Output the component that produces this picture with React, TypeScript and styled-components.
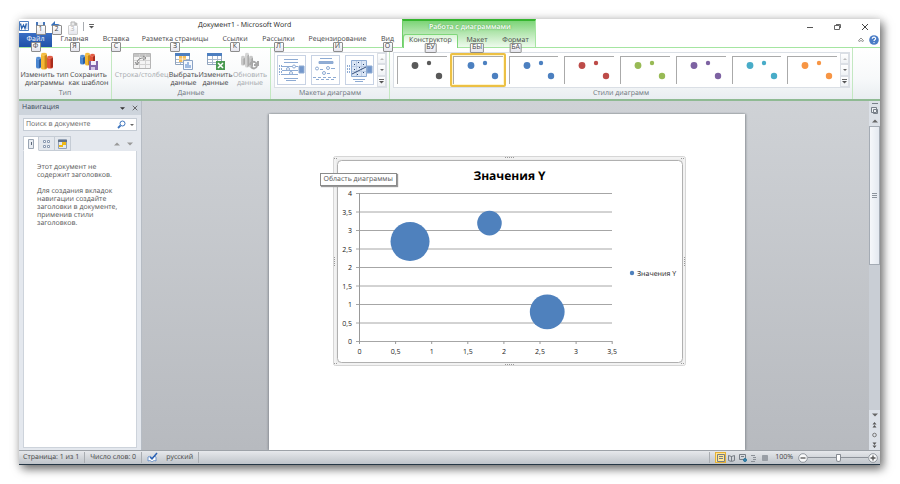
import React from "react";
import styled, { createGlobalStyle, css } from "styled-components";

const GlobalStyle = createGlobalStyle`
  * { box-sizing: border-box; }
  body { margin: 0; background: #fff; font-family: "Open Sans", "Noto Sans", sans-serif; font-size: 7px; line-height: 8px; color: #444; text-rendering: geometricPrecision; }
  button, input { font: inherit; color: inherit; margin: 0; padding: 0; border: 0; background: none; text-rendering: inherit; }
  h1, h2, p { margin: 0; font: inherit; }
  svg { display: block; flex: none; }
`;

const Desktop = styled.div`
  min-height: 100vh;
  padding: 19px 20px 19px 19px;
  display: flex;
  flex-direction: column;
`;

const AppWindow = styled.div`
  flex: 1;
  display: flex;
  flex-direction: column;
  background: #fff;
  border-bottom: 1px solid #263746;
  box-shadow: 3px 4px 9px rgba(0, 0, 0, 0.55), 0 0 10px rgba(0, 0, 0, 0.14);
`;

/* ---------- header ---------- */

const Header = styled.header`
  display: flex;
  height: 29px;
  border-bottom: 1px solid #a5e5a1;
`;

const MainColumn = styled.div`
  width: 383px;
  display: flex;
  flex-direction: column;
`;

const TitleRow = styled.div`
  height: 15px;
  display: flex;
  align-items: center;
`;

const QuickBar = styled.div`
  width: 179px;
  display: flex;
  align-items: center;
  gap: 5px;
`;

const QuickButton = styled.button`
  position: relative;
  width: 11px;
  height: 11px;
`;

const Divider = styled.span<{ $height?: number }>`
  width: 1px;
  height: ${(p) => p.$height ?? 9}px;
  background: #a9adb2;
`;

const DocTitle = styled.h1`
  font-size: 7px;
  color: #222;
  white-space: nowrap;
`;

const Tabs = styled.nav`
  display: flex;
  height: 14px;
`;

const Tab = styled.button<{ $width: number; $kind?: "file" | "active" }>`
  position: relative;
  width: ${(p) => p.$width}px;
  height: 14px;
  white-space: nowrap;
  ${(p) =>
    p.$kind === "file" &&
    css`
      color: #fff;
      background: linear-gradient(#3a6ec4, #1f51a8);
    `}
  ${(p) =>
    p.$kind === "active" &&
    css`
      border-radius: 2px 2px 0 0;
      box-shadow: inset 1px 1px #7fd77a, inset -1px 0 #7fd77a, 0 1px #fff;
      background: linear-gradient(#d5f3d1, #fff 70%);
    `}
`;

const KeyTip = styled.span<{ $quick?: boolean; $dim?: boolean }>`
  position: absolute;
  top: ${(p) => (p.$quick ? 4 : 9)}px;
  left: 50%;
  transform: translateX(-50%);
  z-index: 2;
  min-width: 10px;
  height: 10px;
  padding: 0 1px;
  border: 1px solid ${(p) => (p.$dim ? "#cfcfcf" : "#8d8d8d")};
  border-radius: 1px;
  background: linear-gradient(#fff, #e5e5ed);
  color: ${(p) => (p.$dim ? "#b5b5b5" : "#444")};
  font-size: 7px;
  line-height: 8px;
  text-align: center;
`;

const ContextGroup = styled.div`
  width: 134px;
  border-top: 2px solid #34b52e;
  border-right: 1px solid #a5e5a1;
  border-left: 1px solid #6fce69;
  background: linear-gradient(#7cd477, #b3e6af 45%, #eefaed);
`;

const ContextTitle = styled.div`
  height: 13px;
  line-height: 14px;
  padding-left: 26px;
  color: #fff;
  font-weight: 600;
  text-shadow: 0 0 2px #3c9a37;
`;

const WindowColumn = styled.div`
  flex: 1;
  display: flex;
  flex-direction: column;
  align-items: flex-end;
`;

const WindowButtons = styled.div`
  height: 16px;
  display: flex;
  align-items: center;
  gap: 19px;
  padding-right: 11px;
`;

const HelpButtons = styled.div`
  display: flex;
  align-items: center;
  gap: 5px;
  padding: 0 1px;
`;

/* ---------- ribbon ---------- */

const Ribbon = styled.section`
  display: flex;
  height: 53px;
  background: linear-gradient(#fff, #f7f9fa 60%, #e9edf1);
  border-bottom: 2px solid #8fba93;
`;

const Group = styled.div<{ $grow?: boolean; $width?: number }>`
  display: flex;
  flex-direction: column;
  ${(p) => (p.$grow ? "flex: 1; min-width: 0;" : `width: ${p.$width}px; flex: none;`)}
  border-right: 1px solid #c3e8c1;
`;

const GroupBody = styled.div`
  flex: 1;
  display: flex;
  align-items: stretch;
  padding: 4px 2px 0;
`;

const GroupName = styled.div`
  height: 10px;
  line-height: 10px;
  text-align: center;
  color: #6b737c;
`;

const RibbonTail = styled.div`
  flex: none;
  width: 27px;
`;

const BigButton = styled.button<{ $width: number }>`
  width: ${(p) => p.$width}px;
  display: flex;
  flex-direction: column;
  align-items: center;
  gap: 2px;
  white-space: nowrap;
  &:disabled { color: #a4a8ac; }
`;

const ButtonText = styled.span`
  display: flex;
  flex-direction: column;
  align-items: center;
`;

const Gallery = styled.div<{ $grow?: boolean }>`
  display: flex;
  height: 36px;
  ${(p) => p.$grow && "flex: 1; min-width: 0;"}
  margin-left: 1px;
  border: 1px solid #dadfe5;
  background: #fff;
`;

const LayoutItems = styled.div`
  display: flex;
  align-items: center;
  gap: 5px;
  padding: 0 3px 0 2px;
`;

const LayoutItem = styled.button`
  width: 29px;
  height: 30px;
  border: 1px solid #c7d2e4;
  background: #fff;
`;

const StyleItems = styled.div`
  flex: 1;
  min-width: 0;
  display: grid;
  grid-template-columns: repeat(8, minmax(0, 1fr));
`;

const StyleItem = styled.button<{ $selected?: boolean }>`
  height: 34px;
  padding: 1px;
  border: 2px solid transparent;
  ${(p) => p.$selected && "border-color: #ecc044; border-radius: 2px; background: #fff5cf;"}
`;

const StylePreview = styled.span`
  display: block;
  height: 28px;
  border-top: 1px solid #aaa;
  border-left: 1px solid #aaa;
  background: #fff;
`;

const GalleryScroll = styled.div`
  width: 9px;
  display: flex;
  flex-direction: column;
`;

const ScrollButton = styled.button`
  flex: 1;
  display: grid;
  place-items: center;
  border: 1px solid #dbdfe5;
  background: linear-gradient(#fff, #eff2f5);
`;

/* ---------- workspace ---------- */

const Workspace = styled.main`
  flex: 1;
  display: flex;
  background: linear-gradient(#cfd2d6, #b7babf);
`;

const NavPane = styled.aside`
  width: 123px;
  display: flex;
  flex-direction: column;
  padding-bottom: 2px;
  background: #e4e8ee;
  border-right: 1px solid #b6bcc4;
`;

const NavHeader = styled.div`
  height: 14px;
  display: flex;
  align-items: center;
  gap: 7px;
  padding: 0 3px;
  background: #cdd4dc;
`;

const NavTitle = styled.h2`
  flex: 1;
  color: #3b4a5a;
`;

const SearchBox = styled.label`
  display: flex;
  align-items: center;
  gap: 4px;
  height: 13px;
  margin: 3px 4px 5px;
  padding: 0 2px;
  border: 1px solid #c5ccd5;
  background: #fff;
`;

const SearchInput = styled.input`
  flex: 1;
  min-width: 0;
  outline: 0;
  &::placeholder { color: #666; opacity: 1; }
`;

const NavTabs = styled.div`
  display: flex;
  align-items: center;
  height: 15px;
  padding: 0 4px;
`;

const NavTab = styled.button<{ $active?: boolean }>`
  width: 16px;
  height: 15px;
  display: grid;
  place-items: center;
  border: 1px solid #c5ccd5;
  border-left-width: ${(p) => (p.$active ? 1 : 0)}px;
  ${(p) => p.$active && "background: #fff; border-bottom-color: #fff;"}
`;

const NavArrows = styled.div`
  flex: 1;
  display: flex;
  justify-content: flex-end;
  gap: 7px;
  padding-right: 4px;
`;

const NavContent = styled.div`
  flex: 1;
  display: flex;
  flex-direction: column;
  gap: 8px;
  margin: 0 4px;
  padding: 13px 24px 0 13px;
  border: 1px solid #cdd3db;
  border-top: 0;
  background: #fff;
  color: #555;
  white-space: nowrap;
`;

const DocArea = styled.div`
  flex: 1;
  display: flex;
  justify-content: center;
  padding: 13px 0 0 2px;
`;

const Page = styled.article`
  width: 476px;
  padding: 42px 60px 0 64px;
  background: #fff;
  box-shadow: 1px 0 2px #8d9197, -1px 0 2px #8d9197;
`;

const ChartFrame = styled.figure`
  position: relative;
  margin: 0;
  height: 210px;
`;

const Tooltip = styled.div`
  position: absolute;
  top: 17px;
  left: -13px;
  height: 13px;
  padding: 0 3px;
  border: 1px solid #8b8b8b;
  background: #fff;
  box-shadow: 1px 1px 1px #999;
  color: #555;
  line-height: 11px;
  white-space: nowrap;
`;

const VerticalScroll = styled.div`
  width: 11px;
  display: flex;
  flex-direction: column;
  background: #dce1e8;
`;

const ScrollPart = styled.button<{ $height: number }>`
  height: ${(p) => p.$height}px;
  display: grid;
  place-items: center;
`;

const ScrollTrack = styled.div`
  flex: 1;
  background: #c9ced5;
`;

const ScrollThumb = styled.div`
  height: 49%;
  display: grid;
  place-items: center;
  border: 1px solid #a4abb4;
  background: linear-gradient(90deg, #f6f8fb, #e4e9f0);
`;

/* ---------- status bar ---------- */

const StatusBar = styled.footer`
  height: 14px;
  display: flex;
  align-items: center;
  gap: 5px;
  padding: 0 2px 0 4px;
  border-top: 1px solid #9da2a8;
  background: linear-gradient(#e6e8eb, #bfc4ca);
  white-space: nowrap;
`;

const StatusButton = styled.button`
  display: flex;
  align-items: center;
`;

const StatusItem = styled.span<{ $inset?: number }>`
  padding-left: ${(p) => p.$inset ?? 0}px;
`;

const Spacer = styled.span`
  flex: 1;
`;

const Views = styled.div`
  display: flex;
  align-items: center;
`;

const ViewButton = styled.button<{ $active?: boolean }>`
  width: 11px;
  height: 11px;
  display: grid;
  place-items: center;
  border: 1px solid transparent;
  ${(p) => p.$active && "border-color: #e6b136; background: #ffe694;"}
`;

const Zoom = styled.div`
  display: flex;
  align-items: center;
`;

const ZoomRange = styled.input`
  appearance: none;
  width: 60px;
  height: 10px;
  background: linear-gradient(#8d9299, #8d9299) center / 100% 1px no-repeat;
  &::-webkit-slider-thumb {
    appearance: none;
    width: 5px;
    height: 8px;
    border: 1px solid #878c93;
    border-radius: 1px 1px 3px 3px;
    background: #fff;
  }
`;

/* ---------- drawings ---------- */

const Arrow = ({ up, color = "#666", w = 4 }: { up?: boolean; color?: string; w?: number }) => (
  <svg width={w} height={w} viewBox="0 0 4 4">
    <path d={up ? "M0 3h4L2 1z" : "M0 1h4L2 3z"} fill={color} />
  </svg>
);

const MoreArrow = () => (
  <svg width="5" height="6" viewBox="0 0 5 6">
    <path d="M0 1.500h5" stroke="#666" />
    <path d="M0 3h5L2.500 5.500z" fill="#555" />
  </svg>
);

const WordIcon = () => (
  <svg width="11" height="11" viewBox="0 0 11 11">
    <path d="M.5.5h9v9h-9z" fill="#fff" stroke="#4f7fc0" />
    <path d="M7 3h2M7 5h2M7 7h2" stroke="#9ab6dc" />
    <path d="M1.500 2.500l1.200 5L4.500 4l1.500 3.500 1.300-5" fill="none" stroke="#2c64ae" strokeWidth="1.300" />
  </svg>
);

const SaveIcon = () => (
  <svg width="11" height="11" viewBox="0 0 11 11">
    <path d="M1 1h9v9H1z" fill="#4776b8" />
    <path d="M3 1h5v4H3z" fill="#eef4fc" />
    <path d="M3 7h5v3H3z" fill="#cfdcf0" />
  </svg>
);

const UndoIcon = () => (
  <svg width="11" height="11" viewBox="0 0 11 11">
    <path d="M2 4h4c4 0 4 5 1 6" fill="none" stroke="#3972bd" strokeWidth="2" />
    <path d="M0 4l4-4v8z" fill="#3972bd" />
  </svg>
);

const PrintIcon = () => (
  <svg width="11" height="11" viewBox="0 0 11 11">
    <path d="M2 4h7v5H2z" fill="#c4c4c4" />
    <path d="M4 1h4v4H4z" fill="#e9e9e9" stroke="#b5b5b5" />
    <circle cx="9" cy="3" r="1.500" fill="#bbb" />
  </svg>
);

const Bar = ({ x, y, h, c, d, w = 5 }: { x: number; y: number; h: number; c: string; d: string; w?: number }) => (
  <g>
    <path d={`M${x} ${y}v${h}a${w / 2} 1.5 0 0 0 ${w} 0v${-h}z`} fill={c} />
    <path d={`M${x + w * 0.6} ${y}v${h + 1.2}l${w * 0.4} -1.2v${-h}z`} fill={d} />
    <ellipse cx={x + w / 2} cy={y} rx={w / 2} ry="1.3" fill={c} stroke="#fff" strokeOpacity=".45" strokeWidth=".5" />
  </g>
);

const ChartIcon = () => (
  <svg width="18" height="18" viewBox="0 0 18 18">
    <Bar x={0} y={6} h={9} c="#4b87d1" d="#2c5d9f" />
    <Bar x={5} y={2} h={14} c="#f4b834" d="#c7851a" w={6} />
    <Bar x={11} y={5} h={10} c="#e2543a" d="#a92c1b" w={6} />
  </svg>
);

const ChartSaveIcon = () => (
  <svg width="20" height="18" viewBox="0 0 20 18">
    <Bar x={1} y={4} h={7} c="#4b87d1" d="#2c5d9f" w={5} />
    <Bar x={6} y={2} h={10} c="#f4b834" d="#c7851a" w={5} />
    <Bar x={11} y={3} h={8} c="#e2543a" d="#a92c1b" w={5} />
    <path d="M10 9h9v9h-9z" fill="#8468ab" />
    <path d="M12 9h5v4h-5z" fill="#f3effa" />
    <path d="M12 15h4v3h-4z" fill="#d3c6e6" />
  </svg>
);

const SwapIcon = () => (
  <svg width="18" height="18" viewBox="0 0 18 18">
    <path d="M.5 1.500h17v15H.5z" fill="#f4f4f4" stroke="#b5b5b5" />
    <path d="M1 2h16v3H1z" fill="#c4c4c4" />
    <path d="M1 8.500h16M1 12.500h16M6.500 2v14M12.500 2v14" stroke="#d2d2d2" />
    <path d="M4 12c0-5 3-6 7-6M2 10l2 3 2-3M10 4l3 2-3 2" fill="none" stroke="#858585" />
  </svg>
);

const Sheet = () => (
  <g>
    <path d="M.5 1.500h14v11H.5z" fill="#fff" stroke="#8fa3bd" />
    <path d="M0 1h15v3H0z" fill="#4d7fc0" />
    <path d="M1 7.500h13M1 10.500h13M5.500 4v8M10.500 4v8" stroke="#a9b8cc" />
  </g>
);

const SelectDataIcon = () => (
  <svg width="18" height="18" viewBox="0 0 18 18">
    <Sheet />
    <path d="M4 4h7v6H4z" fill="#f4bd59" />
    <path d="M4 7h7M7.500 4v6" stroke="#fff" strokeWidth=".6" />
    <path d="M8.500 8.500h9v9h-9z" fill="#f4f8fd" stroke="#8aa2c4" />
    <path d="M11 16v-4M13 16v-6M15 16v-3" stroke="#4b7fc6" />
  </svg>
);

const EditDataIcon = () => (
  <svg width="18" height="18" viewBox="0 0 18 18">
    <Sheet />
    <path d="M9 9h9v9H9z" fill="#4b9a52" />
    <path d="M11 11l5 5M16 11l-5 5" stroke="#fff" strokeWidth="1.500" />
  </svg>
);

const RefreshIcon = () => (
  <svg width="18" height="18" viewBox="0 0 18 18">
    <Bar x={0} y={5} h={7} c="#c9c9c9" d="#a9a9a9" w={4} />
    <Bar x={4} y={2} h={12} c="#d2d2d2" d="#aaa" w={4} />
    <Bar x={8} y={5} h={9} c="#c4c4c4" d="#a4a4a4" w={4} />
    <path d="M9 13c1-4 5-4 7-1M17 9v4h-4M16 14c-1 3-4 3-6 1" fill="none" stroke="#a8a8a8" strokeWidth="2" />
  </svg>
);

const LayoutIcon = ({ variant }: { variant: number }) => (
  <svg width="27" height="28" viewBox="0 0 27 28">
    {variant === 0 && (
      <g stroke="#8eabd3" fill="none">
        <path d="M6 3.500h14M6 6.500h14M4 10.500h16M4 14.500h16M4 18.500h16M6 22.500h14M8 24.500h10" />
        <path d="M1.500 9v10M3.500 9v10" strokeDasharray="2 1" />
        <circle cx="10" cy="13" r="1.500" fill="#fff" /><circle cx="16" cy="10.500" r="1.500" fill="#fff" /><circle cx="13" cy="17" r="1.500" fill="#fff" />
        <path d="M21 10h5v7h-5z" fill="#7397cb" />
      </g>
    )}
    {variant === 1 && (
      <g stroke="#8eabd3" fill="none">
        <path d="M8 2.500h12" />
        <path d="M7 5.500h14v2H7z" fill="#91add6" />
        <circle cx="5" cy="12.500" r="1.500" /><path d="M8 13.500h3" />
        <circle cx="16" cy="12" r="1.500" /><path d="M19 12.500h4" />
        <circle cx="12" cy="17" r="1.500" /><path d="M15 17.500h3" />
        <path d="M1 21.500h25M4 23.500h20" strokeDasharray="3 2" />
      </g>
    )}
    {variant === 2 && (
      <g stroke="#8eabd3" fill="none">
        <path d="M5.500 4.500h15v16h-15z" fill="#dbe6f5" />
        <path d="M1.500 9v9M3.500 9v9" strokeDasharray="2 1" />
        <path d="M7 23.500h12M9 25.500h8" />
        <path d="M6 10.500h14M6 15.500h14M10.500 5v15M15.500 5v15" stroke="#bccde6" />
        <path d="M6 18l14-7" stroke="#344f7c" />
        <path d="M8 8.500h1M12 6.500h1M17 8.500h1M8 13.500h1M13 11.500h1M17 16.500h1M11 18.500h1" stroke="#24416f" />
        <path d="M21 10h5v7h-5z" fill="#7397cb" />
      </g>
    )}
  </svg>
);

const Dots = ({ color }: { color: string }) => (
  <svg width="46" height="27" viewBox="0 0 46 27" fill={color}>
    <circle cx="17" cy="8.500" r="3.400" />
    <circle cx="31" cy="6" r="2.200" />
    <circle cx="41" cy="19" r="3.200" />
  </svg>
);

const MinimizeIcon = () => (
  <svg width="8" height="8" viewBox="0 0 8 8" stroke="#555"><path d="M1 4.500h6" /></svg>
);
const RestoreIcon = () => (
  <svg width="9" height="8" viewBox="0 0 9 8" stroke="#666" fill="none"><path d="M1.500 2.500h5v4h-5zM3 1.500h4.500V5" /></svg>
);
const CloseIcon = ({ size = 8 }: { size?: number }) => (
  <svg width={size} height={size} viewBox="0 0 8 8" stroke="#444"><path d="M1 1l6 6M7 1L1 7" /></svg>
);
const CollapseIcon = () => (
  <svg width="6" height="6" viewBox="0 0 6 6" stroke="#777" fill="#fff"><path d="M.5 3.500L3 1l2.500 2.500-.5 1-2-1-2 1z" strokeWidth=".8" /></svg>
);
const HelpIcon = () => (
  <svg width="10" height="10" viewBox="0 0 10 10">
    <circle cx="5" cy="5" r="4.800" fill="#4a7cc6" />
    <path d="M3.300 3.800C3.300 1.500 6.800 1.700 6.600 3.800 6.500 4.800 5 4.800 5 6" fill="none" stroke="#fff" strokeWidth="1.200" />
    <circle cx="5" cy="7.600" r=".7" fill="#fff" />
  </svg>
);
const SearchIcon = () => (
  <svg width="9" height="9" viewBox="0 0 9 9" fill="none" stroke="#3d74bd"><circle cx="5.500" cy="3.500" r="2.500" /><path d="M3.500 5.500L1 8" strokeWidth="1.800" /></svg>
);
const HeadingsIcon = () => (
  <svg width="8" height="10" viewBox="0 0 8 10"><path d="M1.500.5h5v9h-5z" fill="#e8ecf2" stroke="#9aa5b3" /><path d="M4.500 3v3" stroke="#5c6878" /></svg>
);
const PagesIcon = () => (
  <svg width="9" height="10" viewBox="0 0 9 10" fill="#fff" stroke="#8b9bb2"><path d="M1.500 1.500h2v2h-2zM5.500 1.500h2v2h-2zM1.500 6.500h2v2h-2zM5.500 6.500h2v2h-2z" /></svg>
);
const ResultsIcon = () => (
  <svg width="9" height="10" viewBox="0 0 9 10"><path d="M.5.5h8v9h-8z" fill="#e3e9f0" stroke="#93a1b5" /><path d="M0 1h9v2H0z" fill="#62728a" /><path d="M4 3h4v3H4zM1 6h4v2H1z" fill="#efb916" /></svg>
);
const ProofIcon = () => (
  <svg width="11" height="11" viewBox="0 0 11 11"><path d="M1 5c2-1 3-1 4 1 1-2 3-2 4-1v4c-2-1-3 0-4 1-1-1-2-2-4-1z" fill="#fff" stroke="#6e95cc" /><path d="M3 5l2 2 5-6" fill="none" stroke="#2c62b3" strokeWidth="1.500" /></svg>
);
const RulerIcon = () => (
  <svg width="9" height="12" viewBox="0 0 9 12" fill="#edf0f4" stroke="#777f89"><path d="M2 .5h6M1.500 4.500h5v5h-5zM3.500 6.500h4v4h-4z" /></svg>
);
const Grip = () => (
  <svg width="5" height="5" viewBox="0 0 5 5" stroke="#8d949d"><path d="M0 .5h5M0 2.500h5M0 4.500h5" /></svg>
);
const BrowseIcon = ({ kind }: { kind: "up" | "dot" | "down" }) => (
  <svg width="5" height="6" viewBox="0 0 5 6" fill="#555">
    {kind === "up" && <path d="M.5 2.500l2-2.500 2 2.500zM.5 5.500l2-2.500 2 2.500z" />}
    {kind === "dot" && <circle cx="2.500" cy="3" r="1.800" fill="none" stroke="#777" />}
    {kind === "down" && <path d="M.5.5h4l-2 2.500zM.5 3.500h4l-2 2.500z" />}
  </svg>
);
const ViewIcon = ({ kind }: { kind: number }) => (
  <svg width="8" height="8" viewBox="0 0 8 8" fill="none" stroke="#777d85">
    {kind === 0 && <path d="M.5.5h7v7h-7zM2 2.500h4M2 4.500h4" />}
    {kind === 1 && <path d="M.5 1.500l3 1 3-1v5l-3 1-3-1zM3.500 2v5" />}
    {kind === 2 && <><path d="M.5.5h6v5h-6zM2 2.500h3" /><circle cx="6" cy="6" r="1.500" fill="#3c86b5" stroke="#287497" /></>}
    {kind === 3 && <path d="M1 1.500h4M3 3.500h3M3 5.500h3M1 7.500h4" stroke="#8b9097" />}
    {kind === 4 && <path d="M1.500 1.500h5v5h-5z" fill="#999ea5" stroke="#999ea5" />}
  </svg>
);
const ZoomSign = ({ plus }: { plus?: boolean }) => (
  <svg width="10" height="10" viewBox="0 0 10 10"><circle cx="5" cy="5" r="4.300" fill="#f8f9fa" stroke="#7e848c" strokeWidth=".8" /><path d={plus ? "M2.500 5h5M5 2.500v5" : "M2.500 5h5"} stroke="#555" strokeWidth="1.300" /></svg>
);

/* ---------- data ---------- */

const mainTabs = [
  { name: "Главная", tip: "Я", width: 45 },
  { name: "Вставка", tip: "С", width: 38 },
  { name: "Разметка страницы", tip: "З", width: 80 },
  { name: "Ссылки", tip: "К", width: 40 },
  { name: "Рассылки", tip: "Л", width: 47 },
  { name: "Рецензирование", tip: "И", width: 71 },
  { name: "Вид", tip: "О", width: 29 },
];

const styleColors = ["#595959", "#4c80c0", "#4c80c0", "#bd4b48", "#98ba55", "#7d62a2", "#48acc8", "#f79544"];

const yLabels = ["4", "3,5", "3", "2,5", "2", "1,5", "1", "0,5", "0"];
const xLabels = ["0", "0,5", "1", "1,5", "2", "2,5", "3", "3,5"];
const bubbles = [
  { x: 0.7, y: 2.7, r: 19.5 },
  { x: 1.8, y: 3.2, r: 12.3 },
  { x: 2.6, y: 0.8, r: 17.4 },
];
const plotX = (v: number) => 26.5 + v * 72.2;
const plotY = (v: number) => 185.5 - v * 37;

const BubbleChart = () => (
  <svg width="353" height="210" viewBox="0 0 353 210" fontSize="7" fill="#222" role="img" aria-label="Значения Y">
    <rect x=".5" y=".5" width="352" height="209" rx="2" fill="#ececec" stroke="#d6d6d6" />
    <rect x="2" y="2" width="349" height="206" fill="none" stroke="#f8f8f8" />
    <rect x="4.500" y="4.500" width="345" height="202" rx="4" fill="#fff" stroke="#b0b0b0" />
    <g stroke="#999" strokeDasharray="1 1">
      <path d="M172 1.500h9M172 208.500h9M1.500 101v9M351.500 101v9M1 2.500h4M348 2.500h4M1 207.500h4M348 207.500h4" />
    </g>
    <text x="176.500" y="24" fontSize="12" fontWeight="700" textAnchor="middle" fill="#000">Значения Y</text>
    {yLabels.map((label, i) => (
      <g key={label}>
        <path d={`M23 ${37.5 + i * 18.5}H279`} stroke="#a6a6a6" />
        <text x="19" y={40 + i * 18.5} textAnchor="end">{label}</text>
      </g>
    ))}
    <path d="M26.500 37v151" stroke="#999" />
    {xLabels.map((label, i) => (
      <g key={label}>
        <path d={`M${plotX(i / 2)} 185v3`} stroke="#999" />
        <text x={plotX(i / 2)} y="198" textAnchor="middle">{label}</text>
      </g>
    ))}
    {bubbles.map((b) => (
      <circle key={b.x} cx={plotX(b.x)} cy={plotY(b.y)} r={b.r} fill="#4f81bd" />
    ))}
    <circle cx="299" cy="117" r="2.200" fill="#4f81bd" />
    <text x="304" y="119.500">Значения Y</text>
  </svg>
);

const Scroller = () => (
  <GalleryScroll>
    <ScrollButton aria-label="Вверх"><Arrow up color="#bbb" /></ScrollButton>
    <ScrollButton aria-label="Вниз"><Arrow /></ScrollButton>
    <ScrollButton aria-label="Дополнительно"><MoreArrow /></ScrollButton>
  </GalleryScroll>
);

type CommandProps = { icon: React.ReactNode; lines: string[]; width: number; disabled?: boolean };
const Command = ({ icon, lines, width, disabled }: CommandProps) => (
  <BigButton $width={width} disabled={disabled}>
    {icon}
    <ButtonText>{lines.map((l) => <span key={l}>{l}</span>)}</ButtonText>
  </BigButton>
);

export default function App() {
  return (
    <Desktop>
      <GlobalStyle />
      <AppWindow>
        <Header>
          <MainColumn>
            <TitleRow>
              <QuickBar>
                <WordIcon />
                <QuickButton aria-label="Сохранить"><SaveIcon /><KeyTip $quick>1</KeyTip></QuickButton>
                <QuickButton aria-label="Отменить"><UndoIcon /><KeyTip $quick>2</KeyTip></QuickButton>
                <QuickButton aria-label="Печать" disabled><PrintIcon /><KeyTip $quick $dim>3</KeyTip></QuickButton>
                <Divider />
                <MoreArrow />
              </QuickBar>
              <DocTitle>Документ1 - Microsoft Word</DocTitle>
            </TitleRow>
            <Tabs>
              <Tab $width={33} $kind="file">Файл<KeyTip>Ф</KeyTip></Tab>
              {mainTabs.map((t) => (
                <Tab key={t.name} $width={t.width}>{t.name}<KeyTip>{t.tip}</KeyTip></Tab>
              ))}
            </Tabs>
          </MainColumn>
          <ContextGroup>
            <ContextTitle>Работа с диаграммами</ContextTitle>
            <Tabs>
              <Tab $width={55} $kind="active">Конструктор<KeyTip>БУ</KeyTip></Tab>
              <Tab $width={38}>Макет<KeyTip>БЫ</KeyTip></Tab>
              <Tab $width={39}>Формат<KeyTip>БА</KeyTip></Tab>
            </Tabs>
          </ContextGroup>
          <WindowColumn>
            <WindowButtons>
              <button aria-label="Свернуть"><MinimizeIcon /></button>
              <button aria-label="Восстановить"><RestoreIcon /></button>
              <button aria-label="Закрыть"><CloseIcon /></button>
            </WindowButtons>
            <HelpButtons>
              <button aria-label="Свернуть ленту"><CollapseIcon /></button>
              <button aria-label="Справка"><HelpIcon /></button>
            </HelpButtons>
          </WindowColumn>
        </Header>

        <Ribbon>
          <Group $width={93}>
            <GroupBody>
              <Command width={47} icon={<ChartIcon />} lines={["Изменить тип", "диаграммы"]} />
              <Command width={42} icon={<ChartSaveIcon />} lines={["Сохранить", "как шаблон"]} />
            </GroupBody>
            <GroupName>Тип</GroupName>
          </Group>
          <Group $width={159}>
            <GroupBody>
              <Command width={55} icon={<SwapIcon />} lines={["Строка/столбец"]} disabled />
              <Command width={29} icon={<SelectDataIcon />} lines={["Выбрать", "данные"]} />
              <Command width={35} icon={<EditDataIcon />} lines={["Изменить", "данные"]} />
              <Command width={34} icon={<RefreshIcon />} lines={["Обновить", "данные"]} disabled />
            </GroupBody>
            <GroupName>Данные</GroupName>
          </Group>
          <Group $width={119}>
            <GroupBody>
              <Gallery>
                <LayoutItems>
                  {[0, 1, 2].map((v) => (
                    <LayoutItem key={v} aria-label={`Макет ${v + 1}`}><LayoutIcon variant={v} /></LayoutItem>
                  ))}
                </LayoutItems>
                <Scroller />
              </Gallery>
            </GroupBody>
            <GroupName>Макеты диаграмм</GroupName>
          </Group>
          <Group $grow>
            <GroupBody>
              <Gallery $grow>
                <StyleItems>
                  {styleColors.map((c, i) => (
                    <StyleItem key={i} $selected={i === 1} aria-label={`Стиль ${i + 1}`}>
                      <StylePreview><Dots color={c} /></StylePreview>
                    </StyleItem>
                  ))}
                </StyleItems>
                <Scroller />
              </Gallery>
            </GroupBody>
            <GroupName>Стили диаграмм</GroupName>
          </Group>
          <RibbonTail />
        </Ribbon>

        <Workspace>
          <NavPane>
            <NavHeader>
              <NavTitle>Навигация</NavTitle>
              <button aria-label="Параметры области"><Arrow w={5} color="#333" /></button>
              <button aria-label="Закрыть область"><CloseIcon size={6} /></button>
            </NavHeader>
            <SearchBox>
              <SearchInput aria-label="Поиск" placeholder="Поиск в документе" />
              <SearchIcon />
              <Arrow />
            </SearchBox>
            <NavTabs>
              <NavTab $active aria-label="Заголовки"><HeadingsIcon /></NavTab>
              <NavTab aria-label="Страницы"><PagesIcon /></NavTab>
              <NavTab aria-label="Результаты"><ResultsIcon /></NavTab>
              <NavArrows>
                <Arrow up w={6} color="#999" />
                <Arrow w={6} color="#999" />
              </NavArrows>
            </NavTabs>
            <NavContent>
              <p>Этот документ не<br />содержит заголовков.</p>
              <p>Для создания вкладок<br />навигации создайте<br />заголовки в документе,<br />применив стили<br />заголовков.</p>
            </NavContent>
          </NavPane>
          <DocArea>
            <Page>
              <ChartFrame>
                <BubbleChart />
                <Tooltip role="tooltip">Область диаграммы</Tooltip>
              </ChartFrame>
            </Page>
          </DocArea>
          <VerticalScroll>
            <ScrollPart $height={15} aria-label="Линейка"><RulerIcon /></ScrollPart>
            <ScrollPart $height={10} aria-label="Прокрутить вверх"><Arrow up w={6} /></ScrollPart>
            <ScrollTrack><ScrollThumb><Grip /></ScrollThumb></ScrollTrack>
            <ScrollPart $height={10} aria-label="Прокрутить вниз"><Arrow w={6} /></ScrollPart>
            <ScrollPart $height={10} aria-label="Предыдущая страница"><BrowseIcon kind="up" /></ScrollPart>
            <ScrollPart $height={10} aria-label="Выбор объекта"><BrowseIcon kind="dot" /></ScrollPart>
            <ScrollPart $height={10} aria-label="Следующая страница"><BrowseIcon kind="down" /></ScrollPart>
          </VerticalScroll>
        </Workspace>

        <StatusBar>
          <StatusButton>Страница: 1 из 1</StatusButton>
          <Divider $height={11} />
          <StatusButton>Число слов: 0</StatusButton>
          <Divider $height={11} />
          <StatusButton aria-label="Правописание"><ProofIcon /></StatusButton>
          <StatusItem $inset={3}>русский</StatusItem>
          <Divider $height={11} />
          <Spacer />
          <Divider $height={11} />
          <Views>
            {[0, 1, 2, 3, 4].map((k) => (
              <ViewButton key={k} $active={k === 0} aria-label={`Режим ${k + 1}`}><ViewIcon kind={k} /></ViewButton>
            ))}
          </Views>
          <StatusButton>100%</StatusButton>
          <Zoom>
            <button aria-label="Уменьшить"><ZoomSign /></button>
            <ZoomRange type="range" aria-label="Масштаб" min={0} max={200} defaultValue={100} />
            <button aria-label="Увеличить"><ZoomSign plus /></button>
          </Zoom>
        </StatusBar>
      </AppWindow>
    </Desktop>
  );
}
